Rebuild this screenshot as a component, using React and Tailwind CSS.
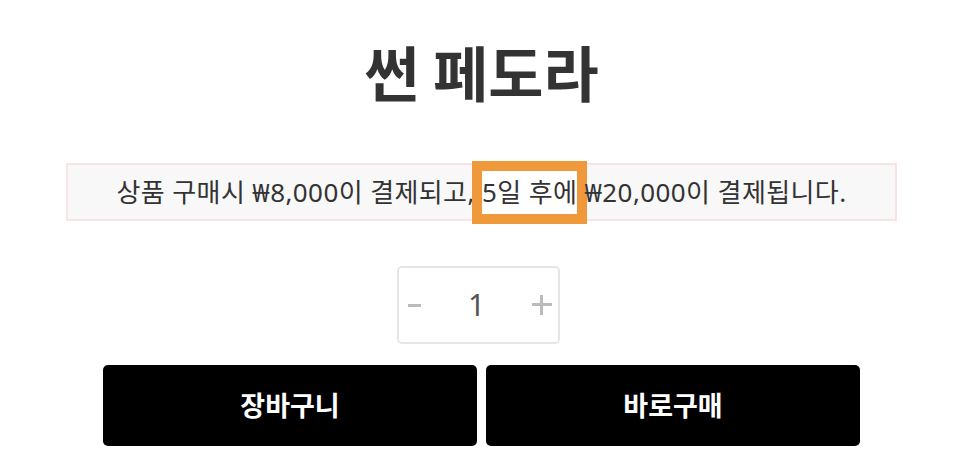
export default function App() {
  const font = { fontFamily: '"Noto Sans", "Noto Sans CJK KR", sans-serif' };
  return (
    <div className="w-[960px] h-[466px] bg-white flex flex-col items-center pl-[3px]" style={font}>
      <h1
        className="mt-[28px] h-[86px] flex items-center text-[60px] font-bold text-[#333] leading-none"
        style={{ fontFamily: '"Noto Sans CJK KR", sans-serif' }}
      >
        썬 페도라
      </h1>
      <div className="mt-[49px] w-[831px] h-[58px] flex items-center justify-center border-2 border-[#f9e3e5] bg-[#f8f8f8] text-[26px] tracking-[0.4px] text-[#333]">
        <span className="whitespace-nowrap leading-[43px]">
          상품 구매시 ₩8,000이 결제되고,{' '}
          <span className="inline-block bg-white outline-[10px] outline-solid outline-[#f0993a] h-[43px] leading-[43px] px-0">
            5일 후에
          </span>{' '}
          ₩20,000이 결제됩니다.
        </span>
      </div>
      <div className="mt-[45px] mr-[6px] w-[163px] h-[78px] border-2 border-[#e6e6e6] rounded-[5px] flex items-center justify-between pl-[9px] pr-[6px]">
        <span className="block w-[13px] h-[3px] bg-[#bbb]" />
        <span className="text-[30px] text-[#555] leading-none">1</span>
        <span className="relative block w-[20px] h-[20px]">
          <span className="absolute left-0 top-[8px] w-[20px] h-[3px] bg-[#bbb]" />
          <span className="absolute top-0 left-[8px] w-[3px] h-[20px] bg-[#bbb]" />
        </span>
      </div>
      <div className="mt-[21px] flex gap-[9px]">
        <button
          className="w-[374px] h-[81px] bg-black rounded-[5px] text-white text-[27px] font-bold"
          style={{ fontFamily: '"Noto Sans CJK KR", sans-serif' }}
        >
          장바구니
        </button>
        <button
          className="w-[374px] h-[81px] bg-black rounded-[5px] text-white text-[27px] font-bold"
          style={{ fontFamily: '"Noto Sans CJK KR", sans-serif' }}
        >
          바로구매
        </button>
      </div>
    </div>
  );
}
